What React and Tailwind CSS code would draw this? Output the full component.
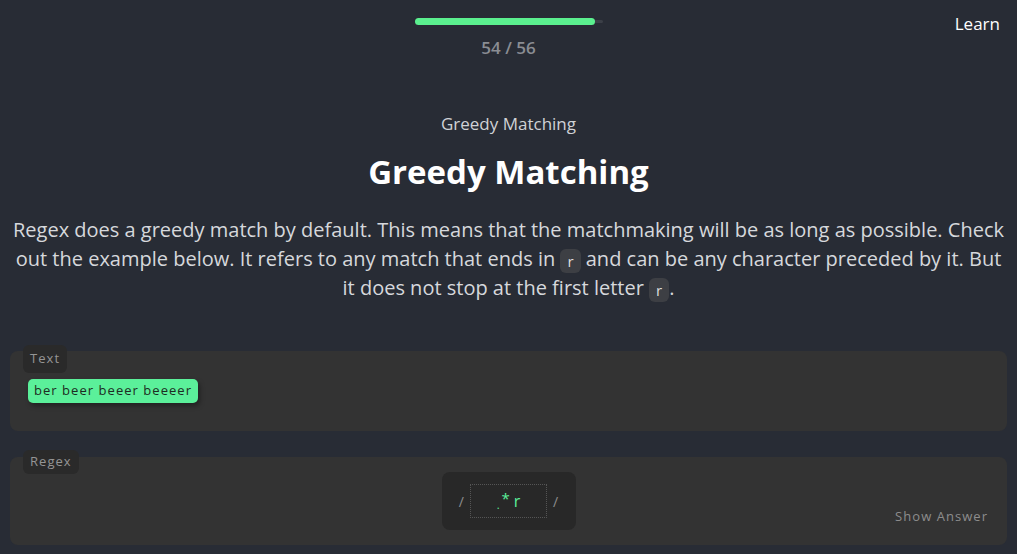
import React from "react";

const Code = ({ children }) => (
  <code className="inline-block rounded-md bg-[#3d3f44] px-[7px] text-[15px] leading-[24px] align-middle font-['Open_Sans',sans-serif] text-[#ddd]">
    {children}
  </code>
);

const App = () => {
  return (
    <div className="min-h-screen bg-[#282c35] font-['Open_Sans',sans-serif] text-white">
      {/* Header */}
      <header className="relative flex flex-col items-center pt-[20px]">
        <div className="h-[3px] w-[188px] rounded-full bg-[#3b3f47] relative">
          <div className="absolute left-0 top-[-2px] h-[7px] w-[180px] rounded-full bg-[#5bf08f]" />
        </div>
        <div className="mt-[12px] text-[17px] font-semibold text-[#8a8d93]">54 / 56</div>
        <a href="#" className="absolute right-[17px] top-[11px] text-[17px] text-white">
          Learn
        </a>
      </header>

      {/* Lesson */}
      <section className="flex flex-col items-center px-[12px] pt-[50px] text-center">
        <p className="text-[17px] text-[#d0d2d6]">Greedy Matching</p>
        <h1 className="mt-[15px] text-[33px] font-bold leading-tight">Greedy Matching</h1>
        <p className="mt-[23px] text-[20px] leading-[29px] text-[#d6d8dc]">
          Regex does a greedy match by default. This means that the matchmaking will be as long as possible. Check out the example below. It refers to any match that ends in <Code>r</Code> and can be any character preceded by it. But it does not stop at the first letter <Code>r</Code>.
        </p>
      </section>

      {/* Text panel */}
      <section className="mx-[10px] mt-[49px] relative h-[80px] rounded-lg bg-[#333333] px-[18px] pt-[26px]">
        <span className="absolute left-[13px] top-[-6px] rounded-md bg-[#2a2a2a] px-[7px] py-[4px] text-[13px] tracking-[0.08em] text-[#959595]">
          Text
        </span>
        <span className="inline-block rounded-[5px] bg-[#5bf09a] px-[6px] py-[2px] text-[13px] tracking-[0.08em] text-[#1e2b22] shadow-[2px_3px_5px_rgba(0,0,0,0.35)]">
          ber beer beeer beeeer
        </span>
      </section>

      {/* Regex panel */}
      <section className="mx-[10px] mt-[26px] relative h-[88px] rounded-lg bg-[#333333] flex justify-center pt-[15px]">
        <span className="absolute left-[13px] top-[-7px] rounded-md bg-[#2a2a2a] px-[7px] py-[2px] text-[13px] tracking-[0.08em] text-[#959595]">
          Regex
        </span>
        <div className="flex h-[58px] w-[134px] items-center justify-center gap-[6px] rounded-lg bg-[#282828] text-[14px] text-[#8d8d8d]">
          <span>/</span>
          <div className="flex h-[34px] w-[77px] items-center justify-center border border-dotted border-[#555] text-[#5bf09a]">
            <span className="text-[11px] mt-[8px]">.</span>
            <span className="text-[15px] -mt-[6px] ml-[2px]">*</span>
            <span className="text-[16px] ml-[4px]">r</span>
          </div>
          <span>/</span>
        </div>
        <button className="absolute right-[19px] bottom-[19px] text-[13px] tracking-[0.08em] text-[#8d8d8d]">
          Show Answer
        </button>
      </section>
    </div>
  );
};

export default App;
